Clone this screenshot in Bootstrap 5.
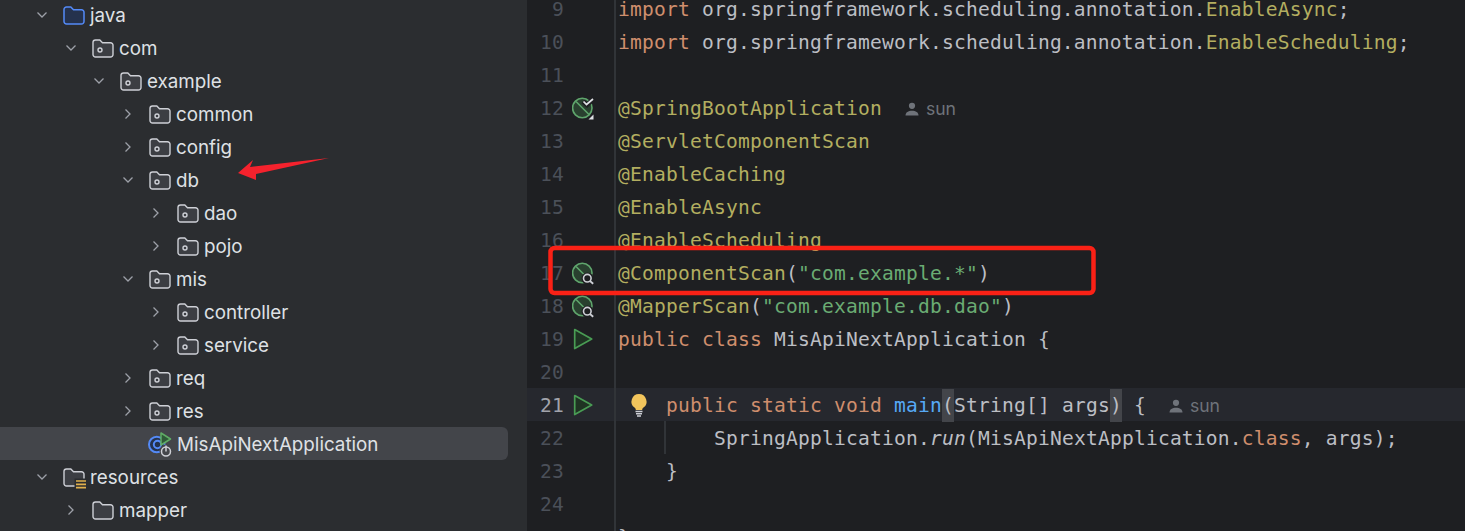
<!DOCTYPE html>
<html lang="en">
<head>
<meta charset="utf-8">
<title>MisApiNextApplication</title>
<link href="https://cdn.jsdelivr.net/npm/bootstrap@5.3.0/dist/css/bootstrap.min.css" rel="stylesheet">
<style>
html,body{height:531px;overflow:hidden;background:#1e1f22}
.ide{height:531px;position:relative;overflow:hidden}
.tree-pane{width:527px;background:#2b2d30;flex:none}
.tree-list{margin-top:-2px;padding:0;list-style:none}
.tree-row{height:33px;color:#dfe1e5;font-family:Inter,"Noto Sans",sans-serif;font-size:18.8px;width:508px}
.tree-row span{padding-top:4px}
.tree-row.sel{background:#43454a;border-radius:0 6px 6px 0}
.lv0{padding-left:34px}.lv1{padding-left:63px}.lv2{padding-left:91px}.lv3{padding-left:120px}.lv4{padding-left:148px}
.chev{width:16px;height:16px;flex:none;margin-right:13px}
.tree-row .chev-none{width:16px;flex:none;margin-right:12px;padding:0}
.fold{width:22px;height:20px;flex:none;margin-right:5px;overflow:visible}
.fold-app{width:24px;height:26px;flex:none;margin-right:5px}
.ed-pane{min-width:0;background:#1e1f22}
.ed-list{margin-top:-8px}
.ln{height:33px;font-family:"DejaVu Sans Mono",monospace;font-size:19.6px;letter-spacing:.2px;color:#bcbec4;white-space:pre}
.ln.cur{background:#26282e}
.num{width:37px;margin-right:8px;padding-top:2px;text-align:right;color:#4b5059;flex:none}
.cur .num{color:#a1a3ab}
.gico{width:24px;height:24px;flex:none;margin-right:18px}
.gutline{width:2px;align-self:stretch;background:#313438;flex:none;margin-right:2px}
.code{flex:none;padding-top:2px}
.kw{color:#cf8e6d}.an{color:#b3ae60}.st{color:#6aab73}.fn{color:#56a8f5}.it{font-style:italic}
.pb{background:#43454a;padding:5px 0}
.hint{font-family:Inter,"Noto Sans",sans-serif;font-size:17.6px;letter-spacing:0;color:#6f737a;margin-left:23px}
.hint svg{width:14px;height:14px;margin-right:7px;vertical-align:-1px}
.bulb{width:20px;height:24px;flex:none;margin-left:11px;margin-right:17px}
.code.guide{border-left:2px solid #313438;margin-left:46px;padding-left:48px;height:33px;line-height:31px}
.overlay{position:absolute;left:0;top:0;pointer-events:none}
</style>
</head>
<body>
<svg width="0" height="0" class="position-absolute">
<defs>
<symbol id="cd" viewBox="0 0 16 16"><path d="M3.500 5.500 8 10l4.500-4.500" fill="none" stroke="#9da0a8" stroke-width="1.300"/></symbol>
<symbol id="cr" viewBox="0 0 16 16"><path d="M5.500 3.500 10 8l-4.500 4.500" fill="none" stroke="#9da0a8" stroke-width="1.300"/></symbol>
<symbol id="pk" viewBox="0 0 22 20"><path d="M1 4.500A2.500 2.500 0 0 1 3.500 2h4.300l2.700 2.700H18.500A2.500 2.500 0 0 1 21 7.200v9.300a2.500 2.500 0 0 1-2.500 2.500h-15A2.500 2.500 0 0 1 1 16.500z" fill="#3c3e43" stroke="#ced0d6" stroke-width="1.400"/><circle cx="8" cy="12" r="2" fill="none" stroke="#ced0d6" stroke-width="1.400"/></symbol>
<symbol id="fd" viewBox="0 0 22 20"><path d="M1 4.500A2.500 2.500 0 0 1 3.500 2h4.300l2.700 2.700H18.500A2.500 2.500 0 0 1 21 7.200v9.300a2.500 2.500 0 0 1-2.500 2.500h-15A2.500 2.500 0 0 1 1 16.500z" fill="#3c3e43" stroke="#ced0d6" stroke-width="1.400"/></symbol>
<symbol id="person" viewBox="0 0 14 14"><circle cx="7" cy="3.800" r="3.100" fill="#6f737a"/><path d="M.5 13.500c0-3.200 2.800-4.800 6.500-4.800s6.500 1.600 6.500 4.800z" fill="#6f737a"/></symbol>
<symbol id="run" viewBox="0 0 24 24"><path d="M2.700 2.500 19.700 12 2.700 21.500z" fill="#1f3323" stroke="#499c54" stroke-width="1.700" stroke-linejoin="round"/></symbol>
<symbol id="leafm" viewBox="0 0 24 24"><circle cx="10.300" cy="12" r="9.700" fill="#29402f" stroke="#5fa56c" stroke-width="1.600"/><path d="M4 5.500l9 9" stroke="#5fa56c" stroke-width="1.600"/><circle cx="15.500" cy="17.500" r="6" fill="#1e1f22"/><circle cx="15.300" cy="17.200" r="3.800" fill="none" stroke="#ced0d6" stroke-width="1.600"/><path d="m18 20 3.200 2.800" stroke="#ced0d6" stroke-width="1.800"/></symbol>
</defs>
</svg>
<div class="ide d-flex">
  <div class="tree-pane">
    <ul class="tree-list">
      <li class="tree-row lv0 d-flex align-items-center"><svg class="chev"><use href="#cd"/></svg><svg class="fold" viewBox="0 0 22 20"><path d="M1 4.500A2.500 2.500 0 0 1 3.500 2h4.300l2.700 2.700H18.500A2.500 2.500 0 0 1 21 7.200v9.300a2.500 2.500 0 0 1-2.500 2.500h-15A2.500 2.500 0 0 1 1 16.500z" fill="#25324d" stroke="#548af7" stroke-width="1.500"/></svg><span>java</span></li>
      <li class="tree-row lv1 d-flex align-items-center"><svg class="chev"><use href="#cd"/></svg><svg class="fold"><use href="#pk"/></svg><span>com</span></li>
      <li class="tree-row lv2 d-flex align-items-center"><svg class="chev"><use href="#cd"/></svg><svg class="fold"><use href="#pk"/></svg><span>example</span></li>
      <li class="tree-row lv3 d-flex align-items-center"><svg class="chev"><use href="#cr"/></svg><svg class="fold"><use href="#pk"/></svg><span>common</span></li>
      <li class="tree-row lv3 d-flex align-items-center"><svg class="chev"><use href="#cr"/></svg><svg class="fold"><use href="#pk"/></svg><span>config</span></li>
      <li class="tree-row lv3 d-flex align-items-center"><svg class="chev"><use href="#cd"/></svg><svg class="fold"><use href="#pk"/></svg><span>db</span></li>
      <li class="tree-row lv4 d-flex align-items-center"><svg class="chev"><use href="#cr"/></svg><svg class="fold"><use href="#pk"/></svg><span>dao</span></li>
      <li class="tree-row lv4 d-flex align-items-center"><svg class="chev"><use href="#cr"/></svg><svg class="fold"><use href="#pk"/></svg><span>pojo</span></li>
      <li class="tree-row lv3 d-flex align-items-center"><svg class="chev"><use href="#cd"/></svg><svg class="fold"><use href="#pk"/></svg><span>mis</span></li>
      <li class="tree-row lv4 d-flex align-items-center"><svg class="chev"><use href="#cr"/></svg><svg class="fold"><use href="#pk"/></svg><span>controller</span></li>
      <li class="tree-row lv4 d-flex align-items-center"><svg class="chev"><use href="#cr"/></svg><svg class="fold"><use href="#pk"/></svg><span>service</span></li>
      <li class="tree-row lv3 d-flex align-items-center"><svg class="chev"><use href="#cr"/></svg><svg class="fold"><use href="#pk"/></svg><span>req</span></li>
      <li class="tree-row lv3 d-flex align-items-center"><svg class="chev"><use href="#cr"/></svg><svg class="fold"><use href="#pk"/></svg><span>res</span></li>
      <li class="tree-row sel lv3 d-flex align-items-center"><span class="chev-none"></span><svg class="fold-app" viewBox="0 0 24 26"><circle cx="8.800" cy="13.500" r="7.800" fill="#25324d" stroke="#548af7" stroke-width="2"/><circle cx="9.500" cy="13.500" r="3.700" fill="none" stroke="#548af7" stroke-width="2"/><path d="M13 2 22.500 8 13 14z" fill="#2f5a38" stroke="#5fad65" stroke-width="1.500" stroke-linejoin="round"/><circle cx="18" cy="20" r="6.500" fill="#43454a"/><circle cx="18" cy="20.500" r="4.500" fill="none" stroke="#ced0d6" stroke-width="1.500"/><path d="M18 14.500v6" stroke="#ced0d6" stroke-width="1.500"/></svg><span>MisApiNextApplication</span></li>
      <li class="tree-row lv0 d-flex align-items-center"><svg class="chev"><use href="#cd"/></svg><svg class="fold" viewBox="0 0 22 20"><path d="M1 4.500A2.500 2.500 0 0 1 3.500 2h4.300l2.700 2.700H18.500A2.500 2.500 0 0 1 21 7.200v9.300a2.500 2.500 0 0 1-2.500 2.500h-15A2.500 2.500 0 0 1 1 16.500z" fill="#3c3e43" stroke="#ced0d6" stroke-width="1.400"/><path d="M11.500 11.500h12.500v11H11.500z" fill="#2b2d30"/><path d="M13 14h10M13 17.300h10M13 20.600h10" stroke="#e0b04c" stroke-width="1.700"/></svg><span>resources</span></li>
      <li class="tree-row lv1 d-flex align-items-center"><svg class="chev"><use href="#cr"/></svg><svg class="fold"><use href="#fd"/></svg><span>mapper</span></li>
    </ul>
  </div>
  <div class="ed-pane flex-grow-1">
    <div class="ed-list">
      <div class="ln d-flex align-items-center"><span class="num">9</span><span class="gico"></span><span class="gutline"></span><span class="code"><span class="kw">import</span> org.springframework.scheduling.annotation.<span class="an">EnableAsync</span>;</span></div>
      <div class="ln d-flex align-items-center"><span class="num">10</span><span class="gico"></span><span class="gutline"></span><span class="code"><span class="kw">import</span> org.springframework.scheduling.annotation.<span class="an">EnableScheduling</span>;</span></div>
      <div class="ln d-flex align-items-center"><span class="num">11</span><span class="gico"></span><span class="gutline"></span><span class="code"></span></div>
      <div class="ln d-flex align-items-center"><span class="num">12</span><svg class="gico" viewBox="0 0 24 24"><circle cx="10.300" cy="12" r="9.700" fill="#29402f" stroke="#5fa56c" stroke-width="1.600"/><path d="M4 5.500l13 13" stroke="#5fa56c" stroke-width="1.600"/><path d="M11 5.500l4 3.500 7-6.500" fill="none" stroke="#1e1f22" stroke-width="4.500"/><path d="M11.500 5.500l3 3 6.500-5.500" fill="none" stroke="#dfe1e5" stroke-width="1.700"/><path d="M21.500 18.500v5h-5z" fill="#dfe1e5"/></svg><span class="gutline"></span><span class="code"><span class="an">@SpringBootApplication</span><span class="hint"><svg><use href="#person"/></svg>sun</span></span></div>
      <div class="ln d-flex align-items-center"><span class="num">13</span><span class="gico"></span><span class="gutline"></span><span class="code an">@ServletComponentScan</span></div>
      <div class="ln d-flex align-items-center"><span class="num">14</span><span class="gico"></span><span class="gutline"></span><span class="code an">@EnableCaching</span></div>
      <div class="ln d-flex align-items-center"><span class="num">15</span><span class="gico"></span><span class="gutline"></span><span class="code an">@EnableAsync</span></div>
      <div class="ln d-flex align-items-center"><span class="num">16</span><span class="gico"></span><span class="gutline"></span><span class="code an">@EnableScheduling</span></div>
      <div class="ln d-flex align-items-center"><span class="num">17</span><svg class="gico"><use href="#leafm"/></svg><span class="gutline"></span><span class="code"><span class="an">@ComponentScan</span>(<span class="st">"com.example.*"</span>)</span></div>
      <div class="ln d-flex align-items-center"><span class="num">18</span><svg class="gico"><use href="#leafm"/></svg><span class="gutline"></span><span class="code"><span class="an">@MapperScan</span>(<span class="st">"com.example.db.dao"</span>)</span></div>
      <div class="ln d-flex align-items-center"><span class="num">19</span><svg class="gico"><use href="#run"/></svg><span class="gutline"></span><span class="code"><span class="kw">public class</span> MisApiNextApplication {</span></div>
      <div class="ln d-flex align-items-center"><span class="num">20</span><span class="gico"></span><span class="gutline"></span><span class="code"></span></div>
      <div class="ln cur d-flex align-items-center"><span class="num">21</span><svg class="gico"><use href="#run"/></svg><span class="gutline"></span><svg class="bulb" viewBox="0 0 20 24"><path d="M10 1a7.500 7.500 0 0 0-4.500 13.500c1 .8 1.300 1.500 1.300 2.500h6.400c0-1 .3-1.700 1.300-2.500A7.500 7.500 0 0 0 10 1z" fill="#f2c55c"/><path d="M6.500 18.500h7M7 20.800h6M8 23h4" stroke="#ced0d6" stroke-width="1.400"/></svg><span class="code"><span class="kw">public static void</span> <span class="fn">main</span><span class="pb">(</span>String[] args<span class="pb">)</span> {<span class="hint"><svg><use href="#person"/></svg>sun</span></span></div>
      <div class="ln d-flex align-items-center"><span class="num">22</span><span class="gico"></span><span class="gutline"></span><span class="code guide">SpringApplication.<span class="it">run</span>(MisApiNextApplication.<span class="kw">class</span>, args);</span></div>
      <div class="ln d-flex align-items-center"><span class="num">23</span><span class="gico"></span><span class="gutline"></span><span class="code ps-5">}</span></div>
      <div class="ln d-flex align-items-center"><span class="num">24</span><span class="gico"></span><span class="gutline"></span><span class="code"></span></div>
      <div class="ln d-flex align-items-center"><span class="num"></span><span class="gico"></span><span class="gutline"></span><span class="code">}</span></div>
    </div>
  </div>
  <svg class="overlay" width="1465" height="531" viewBox="0 0 1465 531">
    <path d="M238 173 253 160 250 167 329 158 256 174 256 180z" fill="#f5222d"/>
    <rect x="550.500" y="248" width="543" height="45" rx="4" fill="none" stroke="#fa2116" stroke-width="4.500"/>
  </svg>
</div>
<script src="https://cdn.jsdelivr.net/npm/bootstrap@5.3.0/dist/js/bootstrap.bundle.min.js"></script>
</body>
</html>
